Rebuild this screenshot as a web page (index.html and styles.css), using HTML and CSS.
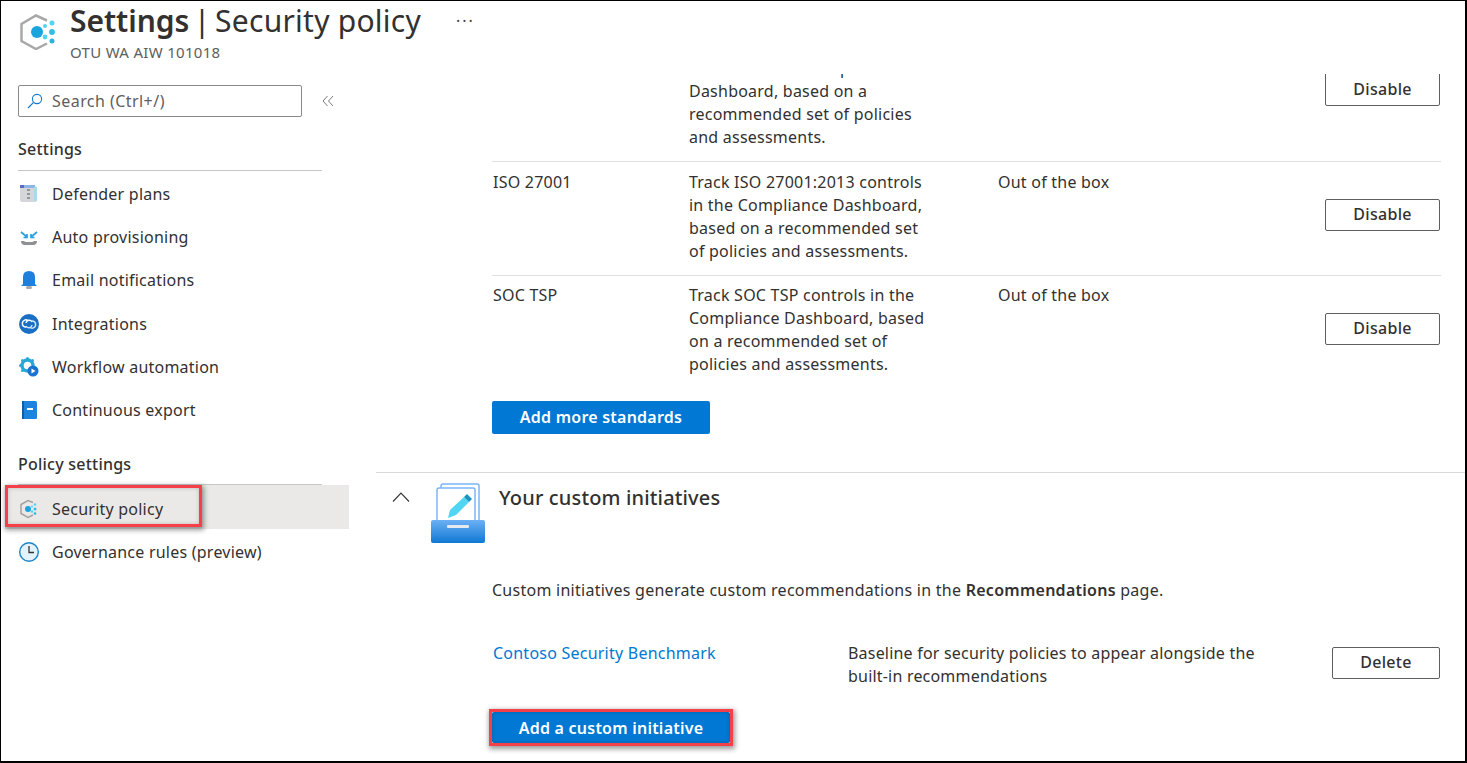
FILE: index.html
```html
<!DOCTYPE html>
<html lang="en">
<head>
<meta charset="utf-8">
<title>Settings | Security policy</title>
<link rel="stylesheet" href="styles.css">
</head>
<body>
<div class="frame">
  <header class="page-head">
    <svg class="head-icon" viewBox="0 0 36 36" width="36" height="36">
      <path d="M27 6.500 L16 1.500 L1.500 10 V27 L16 35 L27 29.500" fill="none" stroke="#a8a8a8" stroke-width="2.500"/>
      <circle cx="17" cy="18" r="6" fill="#1aa3dc"/>
      <circle cx="32" cy="9" r="2.500" fill="#50d5f2"/><circle cx="25" cy="12" r="2" fill="#50d5f2"/>
      <circle cx="32" cy="18" r="2.900" fill="#32bfe6"/><circle cx="25" cy="23" r="2.400" fill="#50d5f2"/>
      <circle cx="32" cy="27" r="2.500" fill="#2bb3de"/>
    </svg>
    <div class="head-text">
      <h1 class="title"><b>Settings</b><span class="pipe"> | </span>Security policy</h1>
      <div class="subtitle">OTU WA AIW 101018</div>
    </div>
    <div class="more">···</div>
  </header>
  <div class="body">
    <aside class="side">
      <div class="search-row">
        <div class="search">
          <svg viewBox="0 0 16 16" width="16" height="16"><circle cx="10" cy="6" r="4.600" fill="none" stroke="#0f78d4" stroke-width="1.100"/><path d="M6.600 9.400 L1 15" stroke="#0f78d4" stroke-width="1.200"/></svg>
          <span>Search (Ctrl+/)</span>
        </div>
        <svg class="collapse" viewBox="0 0 12 12" width="12" height="12"><path d="M5.500 1 L1 6 L5.500 11 M11 1 L6.500 6 L11 11" fill="none" stroke="#7a7a7a" stroke-width="1"/></svg>
      </div>
      <h2 class="group">Settings</h2>
      <nav class="nav nav-first">
        <a class="item">
          <svg viewBox="0 0 20 20" width="20" height="20"><rect x="1" y="2" width="17" height="16" rx="2" fill="#d4d6d9"/><rect x="1" y="1" width="5" height="3" fill="#5a6cc4"/><rect x="5" y="1" width="11" height="3" fill="#8fb4e8"/><rect x="15" y="3" width="3" height="14" fill="#a9dbe8"/><path d="M8 6h3M8 10h3M8 14h3" stroke="#555" stroke-width="1.200"/></svg>
          <span>Defender plans</span>
        </a>
        <a class="item">
          <svg viewBox="0 0 20 20" width="20" height="20"><path d="M2 14 q0 4 4 4 h8 q4 0 4-4 h-3 q-1 1-2 1 h-6 q-1 0-2-1z" fill="#8e9094"/><path d="M2 5 L8 10 M8 7 V10.500 H4.500 M18 5 L12 10 M12 7 V10.500 H15.500" fill="none" stroke="#2a9fe6" stroke-width="1.700"/></svg>
          <span>Auto provisioning</span>
        </a>
        <a class="item">
          <svg viewBox="0 0 20 20" width="20" height="20"><path d="M10 1 q6 0 6 6 v7 l2 2 H2 l2-2 V7 q0-6 6-6z" fill="#1f7fdc"/><rect x="7" y="16" width="6" height="3" rx="1.500" fill="#a9a9a9"/></svg>
          <span>Email notifications</span>
        </a>
        <a class="item">
          <svg viewBox="0 0 20 20" width="20" height="20"><circle cx="10" cy="10" r="10" fill="#1a6fc4"/><path d="M9 6.500 A3.600 3.600 0 1 0 7.500 13 M7 9 A3.200 3.200 0 0 1 13 8" fill="none" stroke="#fff" stroke-width="1.500"/><path d="M11 13.500 A3.600 3.600 0 1 0 12.500 7 M13 11 A3.200 3.200 0 0 1 7 12" fill="none" stroke="#cfe8fa" stroke-width="1.500"/></svg>
          <span>Integrations</span>
        </a>
        <a class="item">
          <svg viewBox="0 0 20 20" width="20" height="20"><circle cx="8.500" cy="8.500" r="5.500" fill="none" stroke="#29a8d8" stroke-width="3.400"/><circle cx="8.500" cy="1.500" r="1.500" fill="#29a8d8"/><circle cx="1.500" cy="8.500" r="1.500" fill="#29a8d8"/><circle cx="3.500" cy="3.500" r="1.500" fill="#29a8d8"/><circle cx="13.500" cy="3.500" r="1.500" fill="#29a8d8"/><circle cx="3.500" cy="13.500" r="1.500" fill="#29a8d8"/><circle cx="14" cy="14" r="5.500" fill="#1a73d0"/><path d="M12.500 11.500 L16.500 14 L12.500 16.500z" fill="#fff"/></svg>
          <span>Workflow automation</span>
        </a>
        <a class="item">
          <svg viewBox="0 0 20 20" width="20" height="20"><rect x="3" y="1" width="15" height="18" rx="1.500" fill="#1c84dc"/><rect x="3" y="1" width="2" height="18" fill="#0f5fa8"/><rect x="8" y="8" width="6" height="2" fill="#fff"/></svg>
          <span>Continuous export</span>
        </a>
      </nav>
      <h2 class="group group-policy">Policy settings</h2>
      <nav class="nav">
        <a class="item item-active">
          <svg viewBox="0 0 20 20" width="20" height="20"><path d="M14 3.500 L9 1.500 L2 5.500 V14.500 L9 18.500 L14 16" fill="none" stroke="#a3a3a3" stroke-width="1.500"/><circle cx="9" cy="10" r="3" fill="#1aa3dc"/><circle cx="16" cy="5.500" r="1.300" fill="#50d5f2"/><circle cx="13" cy="7.500" r="1.100" fill="#50d5f2"/><circle cx="16" cy="10" r="1.500" fill="#32bfe6"/><circle cx="13" cy="12.500" r="1.200" fill="#50d5f2"/><circle cx="16" cy="14.500" r="1.300" fill="#2bb3de"/></svg>
          <span>Security policy</span>
          <i class="mark mark-item"></i>
        </a>
        <a class="item">
          <svg viewBox="0 0 20 20" width="20" height="20"><circle cx="10" cy="10" r="9.300" fill="#e3f2fb" stroke="#1c84c8" stroke-width="1.400"/><path d="M10 4 V10.500 H15" fill="none" stroke="#333" stroke-width="1.300"/></svg>
          <span>Governance rules (preview)</span>
        </a>
      </nav>
    </aside>
    <main class="main">
      <div class="standards">
        <div class="row row-clipped">
          <div class="cell"></div>
          <div class="cell">controls in the Compliance<br>Dashboard, based on a<br>recommended set of policies<br>and assessments.</div>
          <div class="cell"></div>
          <button class="btn btn-disable">Disable</button>
        </div>
        <div class="row row-iso">
          <div class="cell">ISO 27001</div>
          <div class="cell">Track ISO 27001:2013 controls<br>in the Compliance Dashboard,<br>based on a recommended set<br>of policies and assessments.</div>
          <div class="cell">Out of the box</div>
          <button class="btn btn-disable">Disable</button>
        </div>
        <div class="row row-last">
          <div class="cell">SOC TSP</div>
          <div class="cell">Track SOC TSP controls in the<br>Compliance Dashboard, based<br>on a recommended set of<br>policies and assessments.</div>
          <div class="cell">Out of the box</div>
          <button class="btn btn-disable">Disable</button>
        </div>
        <button class="btn-primary btn-standards">Add more standards</button>
      </div>
      <section class="custom">
        <div class="custom-head">
          <svg class="chevron" viewBox="0 0 18 10" width="18" height="10"><path d="M1 9.500 L9 1 L17 9.500" fill="none" stroke="#333" stroke-width="1.100"/></svg>
          <svg class="custom-icon" viewBox="0 0 54 60" width="54" height="60">
            <defs><linearGradient id="drawer" x1="0" y1="0" x2="0" y2="1"><stop offset="0" stop-color="#6cb0f5"/><stop offset="1" stop-color="#0f78d4"/></linearGradient></defs>
            <rect x="10" y="1" width="38" height="40" rx="2" fill="#fff" stroke="#7cb5fb" stroke-width="1.500"/>
            <rect x="6" y="5" width="38" height="40" rx="2" fill="#fff" stroke="#7cb5fb" stroke-width="1.500"/>
            <path d="M17 35 L19 27 L33 14 L38 19 L25 32z" fill="#50d5f2"/>
            <path d="M33 14 L36 11 L41 16 L38 19z" fill="#1b93bd"/>
            <rect y="37" width="54" height="23" rx="2" fill="url(#drawer)"/>
            <rect x="16" y="42" width="22" height="3" rx="1" fill="#e6e9ee"/>
          </svg>
          <h2 class="custom-title">Your custom initiatives</h2>
        </div>
        <p class="custom-desc">Custom initiatives generate custom recommendations in the <b>Recommendations</b> page.</p>
        <div class="custom-row">
          <a class="link">Contoso Security Benchmark</a>
          <div class="custom-text">Baseline for security policies to appear alongside the<br>built-in recommendations</div>
          <button class="btn btn-delete">Delete</button>
        </div>
        <button class="btn-primary btn-initiative">Add a custom initiative<i class="mark mark-btn"></i></button>
      </section>
    </main>
  </div>
</div>
</body>
</html>
```

FILE: styles.css
```css
* { box-sizing: border-box; }
html, body { margin: 0; height: 100%; overflow: hidden; background: #fff; }
body { font-family: "Noto Sans", "Open Sans", sans-serif; color: #323130; font-size: 16px; letter-spacing: .23px; }
.frame { width: 1467px; height: 763px; border: solid #000; border-width: 1px 2px 2px 1px; display: flex; flex-direction: column; overflow: hidden; }

.page-head { height: 73px; flex: none; display: flex; padding-left: 19px; }
.head-icon { margin-top: 13px; flex: none; }
.head-text { margin-left: 14px; }
.title { margin: 0; font-size: 30px; line-height: 40px; font-weight: 400; white-space: pre; letter-spacing: .25px; }
.title b { font-weight: 600; letter-spacing: -.05px; }
.pipe { word-spacing: -3.500px; }
.subtitle { font-size: 15px; line-height: 20px; margin-top: 1px; color: #605e5c; letter-spacing: .3px; }
.more { margin: 9px 0 0 35px; font-size: 16px; letter-spacing: 2px; color: #444; }

.body { flex: 1; display: flex; min-height: 0; }
.side { width: 375px; flex: none; padding-top: 11px; }
.search-row { display: flex; align-items: center; padding-left: 17px; }
.search { width: 284px; height: 32px; border: 1px solid #8a8886; border-radius: 2px; display: flex; align-items: center; padding-left: 8px; gap: 9px; color: #605e5c; letter-spacing: .45px; }
.collapse { margin-left: 20px; }
.group { margin: 21px 0 0 17px; width: 304px; height: 33px; font-size: 16px; font-weight: 500; line-height: 23px; border-bottom: 1px solid #c8c6c4; }
.group-policy { margin-top: 21px; height: 32px; }
.nav { display: flex; flex-direction: column; }
.nav-first { padding-top: 1.500px; }
.item { position: relative; height: 43.200px; width: 348px; display: flex; align-items: center; padding-left: 18px; gap: 13px; color: #323130; }
.item svg { flex: none; }
.item-active { margin: 0 0 2px 4px; width: 344px; padding: 4px 0 0 14px; background: #ebe9e8; height: 44px; }
.mark { position: absolute; border: 3px solid #f5404a; box-shadow: 1px 2px 5px 1px rgba(0,0,0,.4), inset 0 0 4px rgba(0,0,0,.2); pointer-events: none; }
.mark-item { left: 0; top: 0; width: 197px; height: 42px; }
.mark-btn { inset: -3px -3px -3px -3px; }

.main { flex: 1; min-width: 0; }
.standards { padding-left: 116px; padding-right: 24px; }
.row { display: grid; grid-template-columns: 196px 309px 1fr 116px; border-bottom: 1px solid #e1dfdd; height: 114px; padding-top: 8px; line-height: 23px; }
.row-iso { padding-top: 9px; }
.row-iso .btn-disable { margin-top: 28px; }
.row-last { border-bottom: 0; }
.row-clipped { height: 88px; padding-top: 0; overflow: hidden; grid-template-rows: 87px; align-items: end; }
.row-clipped .cell { padding-bottom: 12px; }
.cell { padding-left: 1px; white-space: nowrap; }
.btn { height: 32px; padding: 0 0 3px; background: #fff; border: 1px solid #605e5c; border-radius: 2px; font: 500 16px/1 "Noto Sans", "Open Sans", sans-serif; letter-spacing: .3px; color: #323130; }
.btn-disable { width: 115px; margin-top: 29px; }
.row-clipped .btn-disable { height: 40px; padding: 6px 0 0; margin: 0 0 55px; }
.btn-primary { position: relative; display: block; background: #0078d4; color: #fff; border: 0; border-radius: 2px; font: 600 16px/1 "Noto Sans", "Open Sans", sans-serif; letter-spacing: .23px; height: 33px; }
.btn-standards { width: 218px; margin-top: 11px; padding-bottom: 3px; }

.custom { margin-top: 38px; border-top: 1px solid #d9d9d9; padding-left: 116px; padding-right: 24px; position: relative; }
.custom-head { height: 101px; position: relative; }
.chevron { position: absolute; left: -100px; top: 19px; }
.custom-icon { position: absolute; left: -61px; top: 10px; }
.custom-title { margin: 0 0 0 7px; padding-top: 9px; font-size: 20px; line-height: 32px; font-weight: 500; letter-spacing: .15px; }
.custom-desc { margin: 5px 0 0; line-height: 23px; letter-spacing: .26px; }
.custom-desc b { font-weight: 600; }
.custom-row { display: grid; grid-template-columns: 356px 1fr 109px; margin-top: 40px; line-height: 23px; }
.link { color: #0078d4; padding-left: 1px; }
.custom-text { letter-spacing: .2px; }
.btn-delete { width: 108px; margin-top: 5px; }
.btn-initiative { width: 238px; height: 31px; margin-top: 24px; }
```
